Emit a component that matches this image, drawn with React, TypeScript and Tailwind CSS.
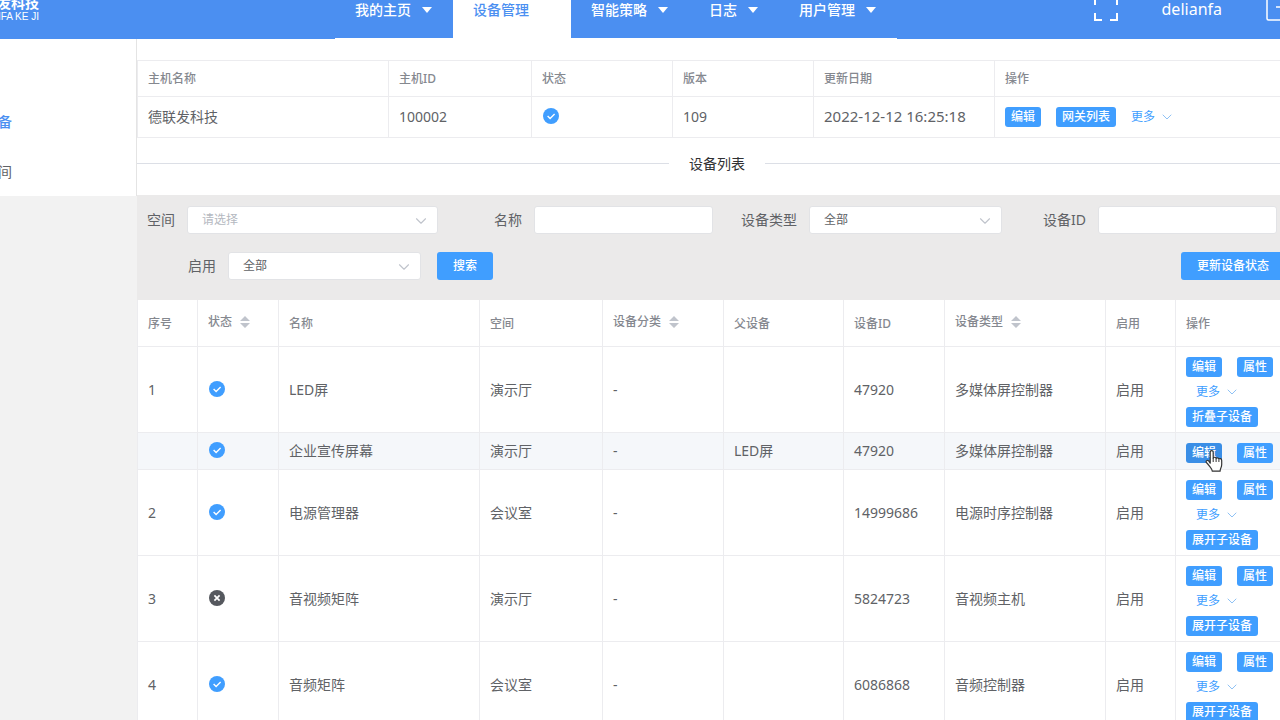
import React, { useState } from 'react';
import { ChevronDown } from 'lucide-react';

interface Device {
  id: string;
  index: string;
  online: boolean;
  name: string;
  space: string;
  parent: string;
  deviceId: string;
  type: string;
  toggle?: string;
}

const navItems = ['我的主页', '设备管理', '智能策略', '日志', '用户管理'];

const devices: Device[] = [
  { id: 'led', index: '1', online: true, name: 'LED屏', space: '演示厅', parent: '', deviceId: '47920', type: '多媒体屏控制器', toggle: '折叠子设备' },
  { id: 'led-child', index: '', online: true, name: '企业宣传屏幕', space: '演示厅', parent: 'LED屏', deviceId: '47920', type: '多媒体屏控制器' },
  { id: 'power', index: '2', online: true, name: '电源管理器', space: '会议室', parent: '', deviceId: '14999686', type: '电源时序控制器', toggle: '展开子设备' },
  { id: 'av', index: '3', online: false, name: '音视频矩阵', space: '演示厅', parent: '', deviceId: '5824723', type: '音视频主机', toggle: '展开子设备' },
  { id: 'audio', index: '4', online: true, name: '音频矩阵', space: '会议室', parent: '', deviceId: '6086868', type: '音频控制器', toggle: '展开子设备' },
];

const columns = [
  { label: '序号', width: 'w-[60px]' },
  { label: '状态', width: 'w-[81px]', sortable: true },
  { label: '名称', width: 'w-[201px]' },
  { label: '空间', width: 'w-[123px]' },
  { label: '设备分类', width: 'w-[121px]', sortable: true },
  { label: '父设备', width: 'w-[120px]' },
  { label: '设备ID', width: 'w-[101px]' },
  { label: '设备类型', width: 'w-[161px]', sortable: true },
  { label: '启用', width: 'w-[70px]' },
  { label: '操作', width: '' },
];

const hostColumns = [
  { label: '主机名称', width: 'w-[251px]' },
  { label: '主机ID', width: 'w-[143px]' },
  { label: '状态', width: 'w-[141px]' },
  { label: '版本', width: 'w-[141px]' },
  { label: '更新日期', width: 'w-[181px]' },
  { label: '操作', width: '' },
];

const thClass = 'border-r border-b border-[#ececef] pl-2.5 text-left text-xs font-medium text-[#85888f]';
const tdClass = 'border-r border-b border-[#ececef] pl-2.5';

function StatusIcon({ online }: { online: boolean }) {
  return (
    <svg viewBox="0 0 16 16" className="mb-0.5 ml-px size-4" aria-label={online ? '在线' : '离线'}>
      <circle cx="8" cy="8" r="8" fill={online ? '#409eff' : '#55585e'} />
      {online ? (
        <path d="M4.6 8.1l2.5 2.4 4.5-4.4" fill="none" stroke="#fff" strokeWidth="1.4" />
      ) : (
        <path d="M5.4 5.4l5.2 5.2M10.6 5.4l-5.2 5.2" fill="none" stroke="#fff" strokeWidth="1.7" />
      )}
    </svg>
  );
}

function SortIcon() {
  return (
    <svg viewBox="0 0 10 12" className="ml-2 h-3 w-2.5" fill="#c0c4cc">
      <path d="M5 0l5 5H0zM5 12l5-5H0z" />
    </svg>
  );
}

function SmallButton({ children, hovered }: { children: React.ReactNode; hovered?: boolean }) {
  return (
    <button
      className={`h-5 rounded-[3px] px-1.5 text-xs leading-5 font-medium text-white hover:bg-[#3a8ee6] ${
        hovered ? 'bg-[#3a8ee6]' : 'bg-[#409eff]'
      }`}
    >
      {children}
    </button>
  );
}

function MoreButton() {
  return (
    <button className="flex items-center gap-1 text-xs text-[#409eff]">
      更多
      <ChevronDown className="size-4 text-[#8fc2f5]" strokeWidth={1.5} />
    </button>
  );
}

function HandCursor() {
  return (
    <svg viewBox="0 0 20 24" className="pointer-events-none absolute top-2.5 left-[18px] h-6 w-5">
      <path
        d="M6.2 14.2V3.2c0-2.2 3-2.2 3 0v6.2c.2-1.6 2.8-1.5 2.9.3.4-1.4 2.7-1.2 2.8.6.6-1.2 2.8-.8 2.8 1.1v4.2c0 1.8-.4 2.6-1 3.8-.5 1.1-.6 1.7-.6 2.8H8.3c-.1-1.6-.8-2.5-1.9-3.8-1.5-1.9-2.4-3.3-3.8-4.6-1.5-1.4.6-3.2 2.1-1.9z"
        fill="#fff"
        stroke="#333"
        strokeWidth="1.2"
        strokeLinejoin="round"
      />
      <path d="M9.2 9.5V13M12.1 10v3M14.9 11v2" stroke="#333" strokeWidth="1" />
    </svg>
  );
}

interface FilterSelectProps {
  id: string;
  label: string;
  options: string[];
  labelWidth: string;
  width: string;
  placeholder?: boolean;
}

function FilterSelect({ id, label, options, labelWidth, width, placeholder }: FilterSelectProps) {
  return (
    <div className="flex shrink-0 items-center">
      <label htmlFor={id} className={`${labelWidth} pr-3 text-right`}>
        {label}
      </label>
      <div className={`relative ${width}`}>
        <select
          id={id}
          className={`h-7 w-full appearance-none rounded-[3px] border border-[#e2e3e6] bg-white pl-3.5 text-xs ${
            placeholder ? 'text-[#b4b8c0]' : 'text-[#606266]'
          }`}
        >
          {options.map((option) => (
            <option key={option}>{option}</option>
          ))}
        </select>
        <ChevronDown className="pointer-events-none absolute top-1.5 right-2 size-4.5 text-[#c0c4cc]" strokeWidth={1.5} />
      </div>
    </div>
  );
}

function FilterInput({ id, label }: { id: string; label: string }) {
  const [value, setValue] = useState('');

  return (
    <div className="flex shrink-0 items-center">
      <label htmlFor={id} className="w-24 pr-3 text-right">
        {label}
      </label>
      <input
        id={id}
        value={value}
        onChange={(e) => setValue(e.target.value)}
        className="h-7 w-[179px] rounded-[3px] border border-[#e2e3e6] bg-white px-3 text-xs"
      />
    </div>
  );
}

function Header() {
  const [active, setActive] = useState('设备管理');

  return (
    <header className="flex h-15 items-center bg-[#4b8ff1] text-white">
      <div className="flex w-10 flex-col items-end justify-center overflow-hidden pr-px whitespace-nowrap">
        <span className="text-sm leading-4 font-bold">德联发科技</span>
        <span className="font-['Liberation_Sans',sans-serif] text-[10px] leading-3">DELIANFA KE JI</span>
      </div>
      <nav className="ml-[295px] flex h-full border-b border-white">
        {navItems.map((item) => (
          <button
            key={item}
            onClick={() => setActive(item)}
            className={`flex items-center gap-2.5 px-5 pt-0.5 text-sm font-medium ${
              active === item ? 'bg-white text-[#4b8ff1]' : ''
            }`}
          >
            {item}
            <svg viewBox="0 0 12 6" className="h-1.5 w-3" fill="#fff">
              <path d="M1 0h10L6 6z" />
            </svg>
          </button>
        ))}
      </nav>
      <div className="ml-auto flex items-center gap-11 pr-[7px]">
        <button aria-label="全屏">
          <svg viewBox="0 0 24 24" className="size-6" fill="none" stroke="#fff" strokeWidth="2">
            <path d="M1 8V1h7M16 1h7v7M23 16v7h-7M8 23H1v-7" />
          </svg>
        </button>
        <span className="text-base leading-4">delianfa</span>
        <button aria-label="退出">
          <svg viewBox="0 0 24 24" className="size-6" fill="none" stroke="#fff" strokeWidth="1.5">
            <path d="M16 5V2.5A1.5 1.5 0 0 0 14.5 1h-12A1.5 1.5 0 0 0 1 2.5v19A1.5 1.5 0 0 0 2.5 23h12a1.5 1.5 0 0 0 1.5-1.5V17M10 10h13M19 6l4 4-4 4" />
          </svg>
        </button>
      </div>
    </header>
  );
}

function HostTable() {
  return (
    <table className="w-full table-fixed border-separate border-spacing-0 border-t border-l border-[#ececef]">
      <thead>
        <tr className="h-9">
          {hostColumns.map((col) => (
            <th key={col.label} className={`${thClass} ${col.width}`}>
              {col.label}
            </th>
          ))}
        </tr>
      </thead>
      <tbody>
        <tr className="h-[41px]">
          <td className={tdClass}>德联发科技</td>
          <td className={tdClass}>100002</td>
          <td className={tdClass}>
            <StatusIcon online />
          </td>
          <td className={tdClass}>109</td>
          <td className={`${tdClass} text-[15px]`}>2022-12-12 16:25:18</td>
          <td className={tdClass}>
            <div className="flex items-center gap-[15px]">
              <SmallButton>编辑</SmallButton>
              <SmallButton>网关列表</SmallButton>
              <MoreButton />
            </div>
          </td>
        </tr>
      </tbody>
    </table>
  );
}

function DeviceTable() {
  return (
    <table className="w-full table-fixed border-separate border-spacing-0 border-l border-[#ececef]">
      <thead>
        <tr className="h-[47px]">
          {columns.map((col) => (
            <th key={col.label} className={`${thClass} ${col.width}`}>
              {col.sortable ? (
                <span className="flex items-center pb-0.5">
                  {col.label}
                  <SortIcon />
                </span>
              ) : (
                <span className="block pt-0.5">{col.label}</span>
              )}
            </th>
          ))}
        </tr>
      </thead>
      <tbody>
        {devices.map((device) => (
          <tr key={device.id} className={device.toggle ? 'h-[86px]' : 'h-[37px] bg-[#f5f7fa]'}>
            <td className={tdClass}>{device.index}</td>
            <td className={tdClass}>
              <StatusIcon online={device.online} />
            </td>
            <td className={tdClass}>{device.name}</td>
            <td className={tdClass}>{device.space}</td>
            <td className={tdClass}>-</td>
            <td className={tdClass}>{device.parent}</td>
            <td className={tdClass}>{device.deviceId}</td>
            <td className={tdClass}>{device.type}</td>
            <td className={tdClass}>启用</td>
            <td className={tdClass}>
              <div className="relative flex gap-[15px] pt-1">
                <SmallButton hovered={!device.toggle}>编辑</SmallButton>
                <SmallButton>属性</SmallButton>
                {!device.toggle && <HandCursor />}
              </div>
              {device.toggle && (
                <>
                  <div className="flex h-[30px] items-center pl-2.5">
                    <MoreButton />
                  </div>
                  <div className="flex">
                    <SmallButton>{device.toggle}</SmallButton>
                  </div>
                </>
              )}
            </td>
          </tr>
        ))}
      </tbody>
    </table>
  );
}

export default function App() {
  return (
    <div className="h-screen overflow-hidden bg-[#f2f2f2] font-['Noto_Sans','Noto_Sans_CJK_SC',sans-serif] text-sm text-[#606266]">
      {/* scrolled view: the page runs past the top and right edges */}
      <div className="-mt-[21px] -mr-[17px]">
        <Header />
        <div className="flex items-start">
          <aside className="w-[137px] shrink-0 border-r border-[#e4e4e4] bg-white pt-[57px]">
            <nav className="-ml-4 flex flex-col">
              <a href="#device" className="flex h-[50px] items-center pt-0.5 font-medium text-[#4b8ff1]">
                设备
              </a>
              <a href="#space" className="flex h-[50px] items-center pt-0.5">
                空间
              </a>
            </nav>
          </aside>
          <main className="min-w-0 flex-1 bg-white pt-[21px]">
            <HostTable />
            <div className="mb-1.5 flex h-[51px] items-center gap-5 text-[#303133]">
              <span className="h-px flex-1 bg-[#dcdfe6]" />
              <h2>设备列表</h2>
              <span className="h-px flex-1 bg-[#dcdfe6]" />
            </div>
            <form className="space-y-[18px] bg-[#ebeaea] pt-[11px] pb-5" onSubmit={(e) => e.preventDefault()}>
              <div className="flex">
                <FilterSelect id="space" label="空间" options={['请选择']} labelWidth="w-[50px]" width="w-[251px]" placeholder />
                <FilterInput id="name" label="名称" />
                <FilterSelect id="type" label="设备类型" options={['全部']} labelWidth="w-24" width="w-[193px]" />
                <FilterInput id="device-id" label="设备ID" />
              </div>
              <div className="flex items-center">
                <FilterSelect id="enabled" label="启用" options={['全部']} labelWidth="w-[91px]" width="w-[193px]" />
                <button className="ml-4 h-7 rounded-[3px] bg-[#409eff] px-4 text-xs font-medium text-white">搜索</button>
                <button className="mr-3 ml-auto h-7 rounded-[3px] bg-[#409eff] px-4 text-xs font-medium text-white">
                  更新设备状态
                </button>
              </div>
            </form>
            <DeviceTable />
          </main>
        </div>
      </div>
    </div>
  );
}
